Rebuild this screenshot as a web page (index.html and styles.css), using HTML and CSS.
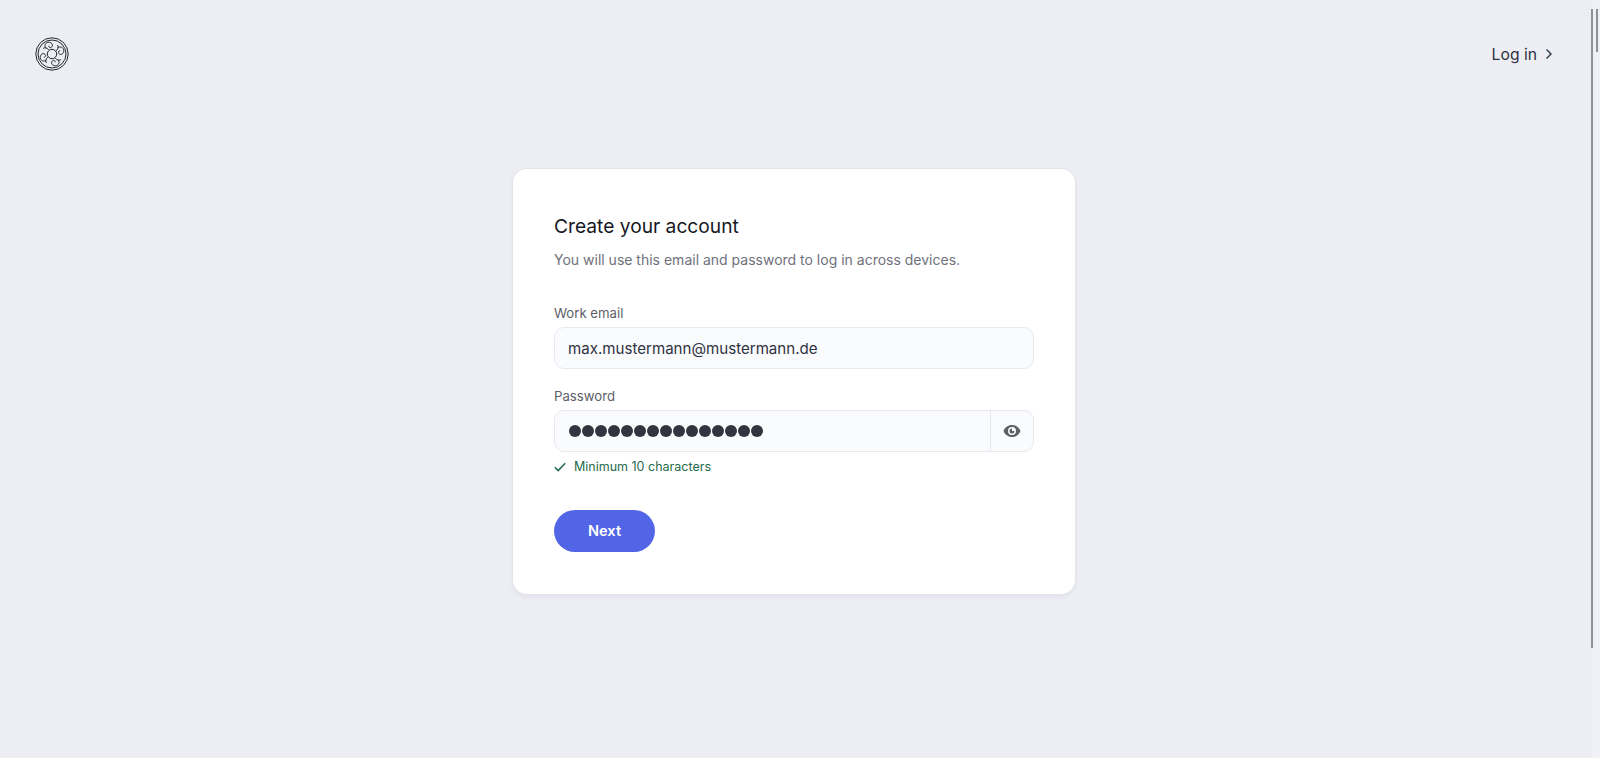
FILE: index.html
```html
<!DOCTYPE html>
<html lang="en">
<head>
<meta charset="utf-8">
<title>Create your account</title>
<link rel="stylesheet" href="styles.css">
</head>
<body>
<div class="page">
  <header class="topbar">
    <svg class="logo" viewBox="0 0 34 34" fill="none" stroke="#23252f" stroke-width="1">
      <defs>
        <g id="knot">
          <path d="M11 11.500C9 9 10 5.500 13.500 5.300 17 5.100 18.500 8.500 16.500 10.200 15.200 11.200 13.500 10.300 13.800 8.800"/>
          <path d="M21 13.800C23 12.500 24 10 22.500 8"/>
        </g>
      </defs>
      <circle cx="17" cy="17" r="16.200"/>
      <circle cx="17" cy="17" r="14"/>
      <circle cx="17" cy="17" r="4.700"/>
      <use href="#knot"/>
      <use href="#knot" transform="rotate(90 17 17)"/>
      <use href="#knot" transform="rotate(180 17 17)"/>
      <use href="#knot" transform="rotate(270 17 17)"/>
    </svg>
    <a class="login" href="#">Log in
      <svg class="chev" viewBox="0 0 10 14" fill="none" stroke="#2f3242" stroke-width="1.400"><path d="M2.500 2.500 7 7l-4.500 4.500"/></svg>
    </a>
  </header>
  <main class="main">
    <form class="card">
      <h1 class="title">Create your account</h1>
      <p class="sub">You will use this email and password to log in across devices.</p>
      <div class="field field-email">
        <label class="label">Work email</label>
        <div class="box"><span class="value">max.mustermann@mustermann.de</span></div>
      </div>
      <div class="field field-pass">
        <label class="label">Password</label>
        <div class="box">
          <span class="dots"><i></i><i></i><i></i><i></i><i></i><i></i><i></i><i></i><i></i><i></i><i></i><i></i><i></i><i></i><i></i></span>
          <span class="eye">
            <svg viewBox="0 0 18 14" width="18" height="14"><path fill="#5f6066" fill-rule="evenodd" d="M9 1C5 1 1.800 3.500.500 7 1.800 10.500 5 13 9 13s7.200-2.500 8.500-6C16.200 3.500 13 1 9 1Zm0 10a4 4 0 1 1 0-8 4 4 0 0 1 0 8Z"/><path fill="#5f6066" d="M9 4.500a2.500 2.500 0 1 0 2.500 2.500H9Z"/></svg>
          </span>
        </div>
        <div class="hint">
          <svg viewBox="0 0 12 10" width="12" height="10" fill="none" stroke="#1f6b4d" stroke-width="1.500"><path d="M.8 5.200 4.200 8.600 11.200 1.200"/></svg>
          <span>Minimum 10 characters</span>
        </div>
      </div>
      <button class="next" type="button">Next</button>
    </form>
  </main>
  <div class="scrollbar"></div>
  <div class="scroll-track"></div>
  <div class="scroll-thumb"></div>
</div>
</body>
</html>
```
FILE: styles.css
```css
* { box-sizing: border-box; }
html, body { margin: 0; height: 100%; overflow: hidden; }
body { background: #edeef4; font-family: "Inter", "Liberation Sans", sans-serif; color: #2f3242; }
.page { position: relative; height: 758px; }
.topbar { display: flex; justify-content: space-between; align-items: center; padding: 37px 46px 0 35px; height: 71px; }
.logo { width: 34px; height: 34px; display: block; }
.login { display: flex; align-items: center; gap: 7px; font-size: 15.700px; color: #2f3242; text-decoration: none; }
.chev { width: 10px; height: 14px; }
.main { display: flex; justify-content: center; padding-top: 98px; padding-right: 12px; }
.card { width: 562px; height: 425px; background: #fff; border-radius: 14px; padding: 41px; box-shadow: 0 0 0 1px #e4e5ec, 0 2px 5px rgba(40,40,70,.08); }
.title { margin: 0; font-size: 19.200px; line-height: 32px; font-weight: 400; color: #16181f; }
.sub { margin: 3px 0 0; font-size: 14px; line-height: 29px; color: #6f717c; }
.field-email { margin-top: 29px; }
.field-pass { margin-top: 17px; }
.label { display: block; font-size: 13.200px; line-height: 20px; color: #5c5e68; margin-bottom: 4px; }
.box { display: flex; align-items: center; height: 42px; border: 1px solid #e7e9ef; border-radius: 10px; background: #fafbfd; padding-left: 13px; }
.value { font-size: 15.100px; color: #2f3242; }
.dots { display: flex; gap: 1px; flex: 1; margin-left: 1px; }
.dots i { width: 12px; height: 12px; border-radius: 50%; background: #33343f; }
.eye { display: flex; align-items: center; justify-content: center; width: 43px; height: 100%; border-left: 1px solid #e7e9ef; }
.hint { display: flex; align-items: center; gap: 8px; margin-top: 6px; font-size: 12.500px; line-height: 18px; color: #1f6b4d; }
.next { display: block; width: 101px; height: 42px; margin-top: 34px; border: 0; border-radius: 21px; background: #5165e6; color: #fff; font: 600 14.600px "Inter", "Liberation Sans", sans-serif; }
.scrollbar { position: absolute; top: 0; right: 0; bottom: 0; width: 8px; background: #f0f1f6; }
.scroll-track { position: absolute; top: 9px; left: 1591px; width: 2px; height: 639px; background: #8f9098; }
.scroll-thumb { position: absolute; top: 9px; left: 1596px; width: 2px; height: 43px; background: #8f9098; }
```
